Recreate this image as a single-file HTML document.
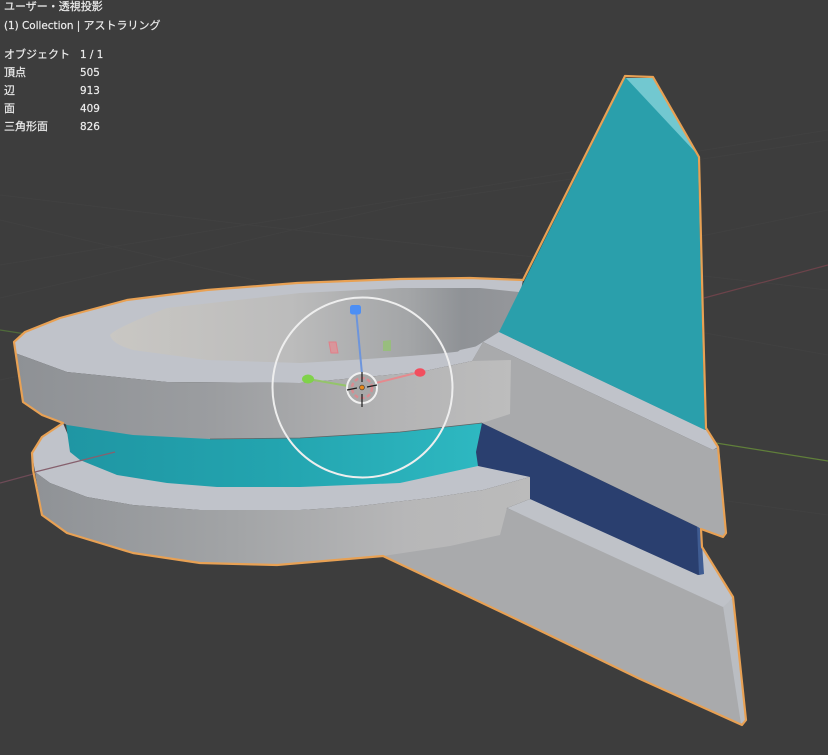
<!DOCTYPE html>
<html lang="ja"><head><meta charset="utf-8"><title>Viewport</title>
<style>
html,body{margin:0;padding:0;background:#3d3d3d;width:828px;height:755px;overflow:hidden}
svg{display:block;filter:blur(.35px)}
text{font-family:"DejaVu Sans","Noto Sans CJK JP",sans-serif;font-size:10.4px;fill:#ececec;stroke:#ececec;stroke-width:.2px}
.c{font-size:11px}
</style></head><body>
<svg width="828" height="755" viewBox="0 0 828 755" xmlns="http://www.w3.org/2000/svg">
<defs>
<linearGradient id="side1" gradientUnits="userSpaceOnUse" x1="15" y1="0" x2="510" y2="0"><stop offset="0" stop-color="#8e9195"/><stop offset=".4" stop-color="#9b9da0"/><stop offset=".75" stop-color="#b3b3b4"/><stop offset="1" stop-color="#bdbdbd"/></linearGradient>
<linearGradient id="side2" gradientUnits="userSpaceOnUse" x1="35" y1="0" x2="530" y2="0"><stop offset="0" stop-color="#8f9296"/><stop offset=".4" stop-color="#a2a4a6"/><stop offset=".75" stop-color="#b7b7b8"/><stop offset="1" stop-color="#bbbbbb"/></linearGradient>
<linearGradient id="hole" gradientUnits="userSpaceOnUse" x1="110" y1="0" x2="510" y2="0"><stop offset="0" stop-color="#c9c7c3"/><stop offset=".45" stop-color="#bcbcbc"/><stop offset=".75" stop-color="#a3a5a7"/><stop offset=".88" stop-color="#8f9296"/><stop offset="1" stop-color="#94969a"/></linearGradient>
<linearGradient id="teal" gradientUnits="userSpaceOnUse" x1="66" y1="0" x2="482" y2="0"><stop offset="0" stop-color="#1f96a3"/><stop offset=".5" stop-color="#23a4af"/><stop offset="1" stop-color="#2eb8c1"/></linearGradient>
</defs>
<rect width="828" height="755" fill="#3d3d3d"/>
<g stroke="#414141" stroke-width="1" fill="none">
<path d="M0 298L400 205L828 140"/><path d="M0 265L828 130"/><path d="M0 220L360 305L520 330"/><path d="M0 195L250 225L828 290"/><path d="M0 380L828 210"/><path d="M660 325L828 355"/><path d="M720 500L828 515"/>
</g>
<path d="M0 483L115 452" stroke="#6e4b57" stroke-width="1.2" fill="none"/>
<path d="M704 298L828 265" stroke="#6c434a" stroke-width="1.2" fill="none"/>
<path d="M0 330L26 334" stroke="#4f6b3a" stroke-width="1.2" fill="none"/>
<path d="M716 443L828 461" stroke="#607f3a" stroke-width="1.2" fill="none"/>

<!-- lower fin -->
<path fill="#a9aaac" d="M507 508L731 608L745 720L741 724L640 679L518 620L440 583L383 556L440 530L500 525Z"/>
<path fill="#babdc2" d="M723 606L733 598L746 720L741 724Z"/>
<path fill="#bfc2c8" d="M507 508L530 499L701 545L733 598L723 607Z"/>
<!-- blue -->
<path fill="#2a3f6f" d="M482 423L698 527L703 574L698 575L530 499L530 477L478 467L476 452Z"/>
<path fill="#3f5c92" d="M697 526L701 529L704 574L699 575Z"/>
<!-- lower ring top face -->
<path fill="#c0c3ca" d="M63 423L42 437L32 453L35 472L50 483L87 497L133 505L200 510L300 510L350 507L430 498L483 490L530 477L478 466L70 440Z"/>
<!-- teal band -->
<path fill="url(#teal)" d="M66 424L70 452L80 460L117 475L167 483L217 487L300 487L400 483L478 466L476 452L482 423L300 430Z"/>
<!-- lower ring side -->
<path fill="url(#side2)" d="M35 472L50 483L87 497L133 505L200 510L300 510L350 507L430 498L483 490L530 477L530 499L507 508L500 535L450 546L383 556L277 565L200 563L133 553L67 533L42 515Z"/>

<!-- top ring top face -->
<path fill="#c0c3ca" d="M14 342L25 332L60 318L127 300L207 290L297 283L400 279L470 278L523 280L510 345L483 342L472 361L420 372L300 383L167 382L67 372L15 353Z"/>
<!-- hole -->
<path fill="url(#hole)" d="M110 335Q115 328 167 308L300 293L400 288L480 288L519 292L500 332L483 342L470 350Q440 355 300 363L207 360L133 350Q112 344 110 335Z"/>
<!-- top fin side -->
<path fill="#a9aaac" d="M483 342L713 450L719 447L726 533L723 537L701 529L698 527L482 423L500 405L500 361L472 361Z"/>
<path fill="#c0c3ca" d="M499 332L706 430L718 447L713 450L483 342Z"/>
<path fill="#c0c3ca" d="M478 346L483 342L472 361L440 365L460 350Z"/>
<!-- top ring side -->
<path fill="url(#side1)" d="M15 353L67 372L167 382L300 383L420 372L472 361L511 360L510 414L482 423L400 432L300 438L210 439L133 435L67 425L63 423L42 415L23 402Z"/>
<path fill="none" stroke="#5f6364" stroke-width=".8" d="M210 439L300 438L400 432L482 423"/>
<!-- teal fin -->
<path fill="#2a9fab" d="M499 332L625 78L653 78L698 156L702 320L705 430Z"/>
<path fill="#72c8d0" d="M626 78L653 78L698 155Z"/>

<!-- silhouette outline on top -->
<path fill="none" stroke="#e8a154" stroke-width="2.2" stroke-linejoin="round" d="M14 342L25 332L60 318L127 300L207 290L297 283L400 279L470 278L523 280L625 76L653 77L699 157L703 320L706 428L718 447L726 533L723 537L701 529L702 547L733 597L746 720L742 725L640 679L518 620L440 583L383 556L277 565L200 563L133 553L67 533L42 515L33 470L32 453L42 437L63 423L42 415L23 402Z"/>
<path d="M35 472L115 452" stroke="#86606e" stroke-width="1.2" fill="none"/>

<!-- gizmo -->
<circle cx="362.5" cy="387.5" r="90" fill="none" stroke="#eeeeee" stroke-width="2"/>
<path d="M356 310L362 374" stroke="#6d95dc" stroke-width="2" fill="none"/>
<rect x="350" y="305" width="11" height="9.5" rx="2.5" fill="#4d8ff5"/>
<path d="M308 379L348 386" stroke="#94c46a" stroke-width="2" fill="none"/>
<ellipse cx="308" cy="379" rx="6" ry="4.5" fill="#80d24a"/>
<path d="M420 372L376 383" stroke="#e58a8e" stroke-width="2" fill="none"/>
<ellipse cx="420" cy="372.5" rx="5.5" ry="4.2" fill="#f24e5e"/>
<path d="M329 342L336 342L338 353L331 353Z" fill="#d9969b" stroke="#e27f88" stroke-width="1"/>
<path d="M383 341L391 340L391 351L383 351Z" fill="#98bd7e"/>
<circle cx="362" cy="388" r="15" fill="#a8a8a8" stroke="#f0f0f0" stroke-width="2"/>
<circle cx="362" cy="388" r="10" fill="none" stroke="#d98b90" stroke-width="2.5" stroke-dasharray="4 2.5"/>
<path d="M362 372V382M362 394V407M347 390L357 388M367 387L377 385" stroke="#1c1c1c" stroke-width="1.2" fill="none"/>
<circle cx="362" cy="387.5" r="2.4" fill="#e88a1c" stroke="#333" stroke-width=".6"/>

<!-- text -->
<text class="c" x="4" y="10">ユーザー・透視投影</text>
<text x="4" y="29">(1) Collection | <tspan class="c">アストラリング</tspan></text>
<text class="c" x="4" y="58">オブジェクト</text><text x="80" y="58">1 / 1</text>
<text class="c" x="4" y="76">頂点</text><text x="80" y="76">505</text>
<text class="c" x="4" y="94">辺</text><text x="80" y="94">913</text>
<text class="c" x="4" y="112">面</text><text x="80" y="112">409</text>
<text class="c" x="4" y="130">三角形面</text><text x="80" y="130">826</text>
</svg>
</body></html>
